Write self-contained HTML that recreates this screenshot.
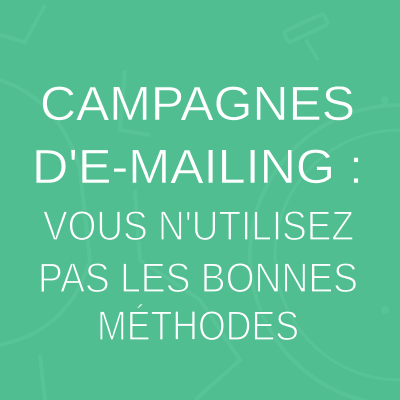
<!DOCTYPE html>
<html><head><meta charset="utf-8"><style>
html,body{margin:0;padding:0;background:#50be91;}
svg{display:block}
</style></head><body>
<svg width="400" height="400" viewBox="0 0 400 400" xmlns="http://www.w3.org/2000/svg">
<rect width="400" height="400" fill="#50be91"/>
<g fill="none" stroke="#58c397" stroke-width="4">
  <circle cx="400" cy="255" r="150"/>
  <circle cx="400" cy="255" r="125" stroke-width="3"/>
  <rect x="284" y="22" width="44" height="12" rx="3" transform="rotate(-25 306 28)"/>
  <path d="M306 40 L318 60"/>
  <path d="M0 35 L25 42 L45 5"/>
  <path d="M0 80 Q60 100 80 170 L90 260 Q70 330 0 345"/>
  <path d="M125 70 L120 130 L150 135"/>
  <path d="M40 355 L45 400"/>
  <path d="M135 190 L140 260 L200 300 L240 360 L195 400"/>
  <circle cx="385" cy="100" r="2" fill="#58c397"/>
  <circle cx="385" cy="310" r="2" fill="#58c397"/>
</g>
<g fill="#fff" stroke="#50be91" stroke-width="0.6" font-family="Liberation Sans, sans-serif">
  <text x="40" y="120" font-size="48" textLength="315" lengthAdjust="spacingAndGlyphs">CAMPAGNES</text>
  <text x="32" y="183" font-size="48" textLength="331" lengthAdjust="spacingAndGlyphs">D'E-MAILING :</text>
</g>
<g fill="#fff" stroke="#50be91" stroke-width="1.3" font-family="Liberation Sans, sans-serif">
  <text x="43" y="240" font-size="42" textLength="311" lengthAdjust="spacingAndGlyphs">VOUS N'UTILISEZ</text>
  <text x="38" y="292" font-size="42" textLength="320" lengthAdjust="spacingAndGlyphs">PAS LES BONNES</text>
  <text x="97" y="340" font-size="42" textLength="202" lengthAdjust="spacingAndGlyphs">MÉTHODES</text>
</g>
</svg>
</body></html>
